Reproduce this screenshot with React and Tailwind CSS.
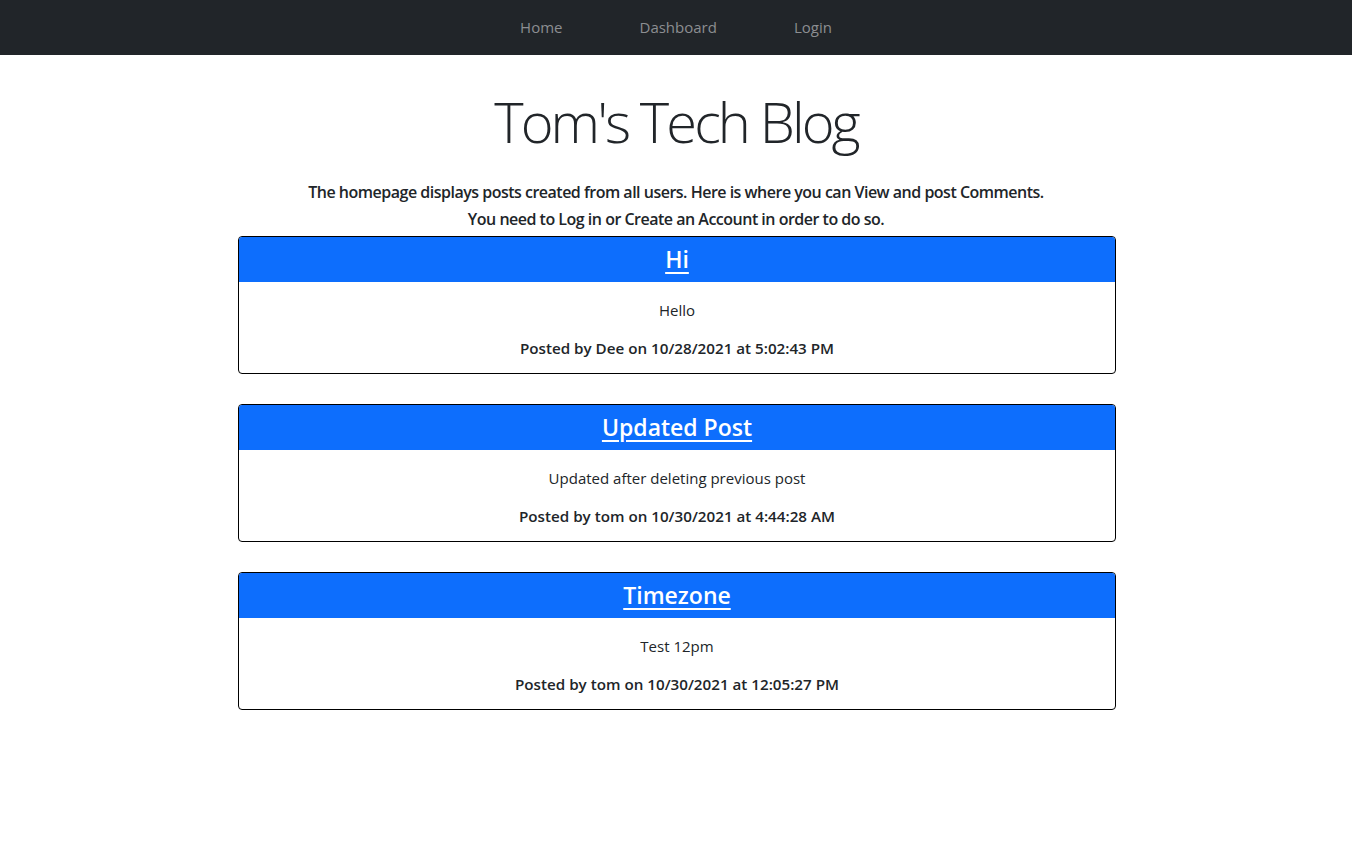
export default function App() {
  const posts = [
    { title: "Hi", body: "Hello", meta: "Posted by Dee on 10/28/2021 at 5:02:43 PM" },
    { title: "Updated Post", body: "Updated after deleting previous post", meta: "Posted by tom on 10/30/2021 at 4:44:28 AM" },
    { title: "Timezone", body: "Test 12pm", meta: "Posted by tom on 10/30/2021 at 12:05:27 PM" },
  ];
  return (
    <div className="min-h-screen bg-white text-[#212529]" style={{ fontFamily: '"Open Sans", "Noto Sans", sans-serif' }}>
      <nav className="h-[55px] bg-[#212529] flex items-center justify-center pb-[1px]">
        <div className="flex gap-[77px] text-[15px] text-[#8c8e91]">
          <a className="cursor-pointer">Home</a>
          <a className="cursor-pointer">Dashboard</a>
          <a className="cursor-pointer">Login</a>
        </div>
      </nav>
      <div className="flex flex-col items-center">
        <h1 className="mt-[33px] text-[56px] leading-[1.2] font-light tracking-[-2.9px]">Tom's Tech Blog</h1>
        <div className="mt-[24px] text-center text-[16px] font-semibold leading-[27px] tracking-[-0.5px]">
          <p>The homepage displays posts created from all users. Here is where you can View and post Comments.</p>
          <p>You need to Log in or Create an Account in order to do so.</p>
        </div>
        <div className="w-[878px] ml-[2px] flex flex-col gap-[30px] mt-[3px]">
          {posts.map((p) => (
            <div key={p.title} className="border border-black rounded-[4px] overflow-hidden">
              <div className="h-[45px] bg-[#0d6efd] flex items-center justify-center">
                <a className="text-white text-[23px] font-semibold underline underline-offset-[4px] cursor-pointer">{p.title}</a>
              </div>
              <div className="h-[91px] flex flex-col items-center text-[15px]">
                <p className="mt-[17px]">{p.body}</p>
                <p className="mt-[15px] font-semibold text-[15.2px]">{p.meta}</p>
              </div>
            </div>
          ))}
        </div>
      </div>
    </div>
  );
}
